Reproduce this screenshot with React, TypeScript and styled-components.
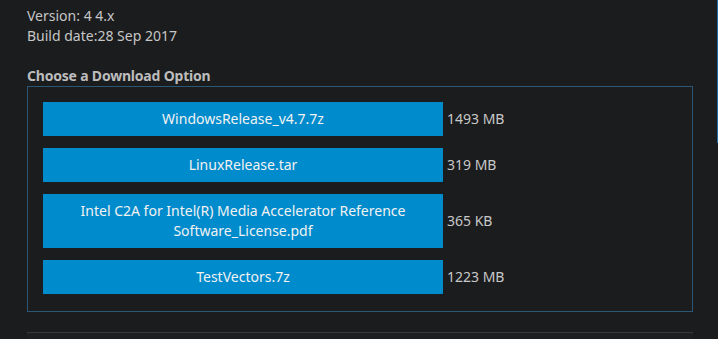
import React from "react";
import styled, { createGlobalStyle } from "styled-components";

const GlobalStyle = createGlobalStyle`
  html, body {
    margin: 0;
    padding: 0;
    background: #1b1c1e;
  }
  body {
    font-family: "Noto Sans", "Open Sans", sans-serif;
    font-size: 14px;
    color: #c8c8c8;
  }
`;

interface IDownload {
  name: string;
  size: string;
}

const downloads: IDownload[] = [
  { name: "WindowsRelease_v4.7.7z", size: "1493 MB" },
  { name: "LinuxRelease.tar", size: "319 MB" },
  {
    name: "Intel C2A for Intel(R) Media Accelerator Reference Software_License.pdf",
    size: "365 KB",
  },
  { name: "TestVectors.7z", size: "1223 MB" },
];

export default function App() {
  return (
    <>
      <GlobalStyle />
      <Page>
        <Meta>
          <MetaLine>Version: 4 4.x</MetaLine>
          <MetaLine>Build date:28 Sep 2017</MetaLine>
        </Meta>
        <Heading>Choose a Download Option</Heading>
        <OptionsBox>
          {downloads.map((d) => (
            <OptionRow key={d.name}>
              <DownloadButton href="#">{d.name}</DownloadButton>
              <FileSize>{d.size}</FileSize>
            </OptionRow>
          ))}
        </OptionsBox>
        <Divider />
        <Footer />
      </Page>
      <ScrollThumb />
    </>
  );
}

const Page = styled.div`
  display: flex;
  flex-direction: column;
  padding: 6px 25px 0 27px;
  min-height: 339px;
  box-sizing: border-box;
`;

const Meta = styled.div`
  display: flex;
  flex-direction: column;
`;

const MetaLine = styled.p`
  margin: 0;
  line-height: 20px;
  color: #c6c6c6;
`;

const Heading = styled.h3`
  margin: 21px 0 1px;
  font-size: 14px;
  line-height: 18px;
  font-weight: 700;
  letter-spacing: -0.2px;
  color: #bdbdbd;
`;

const OptionsBox = styled.div`
  display: flex;
  flex-direction: column;
  gap: 12px;
  padding: 15px 15px 17px;
  border: 1px solid #2b5775;
`;

const OptionRow = styled.div`
  display: flex;
  flex-direction: row;
  align-items: center;
  gap: 4px;
`;

const DownloadButton = styled.a`
  display: block;
  box-sizing: border-box;
  width: 400px;
  flex: none;
  padding: 7px 30px;
  background: #008bcc;
  color: #f2f2f2;
  text-align: center;
  text-decoration: none;
  line-height: 20px;
  font-size: 14px;
`;

const FileSize = styled.span`
  color: #c8c8c8;
  line-height: 20px;
  white-space: nowrap;
`;

const Divider = styled.hr`
  margin: 20px 0 0;
  border: none;
  border-top: 1px solid #38393b;
  height: 0;
`;

const Footer = styled.div`
  flex: 1;
  background: #1e1f21;
`;

const ScrollThumb = styled.div`
  position: absolute;
  top: 0;
  right: 0;
  width: 1px;
  height: 143px;
  background: #1f6fae;
`;
